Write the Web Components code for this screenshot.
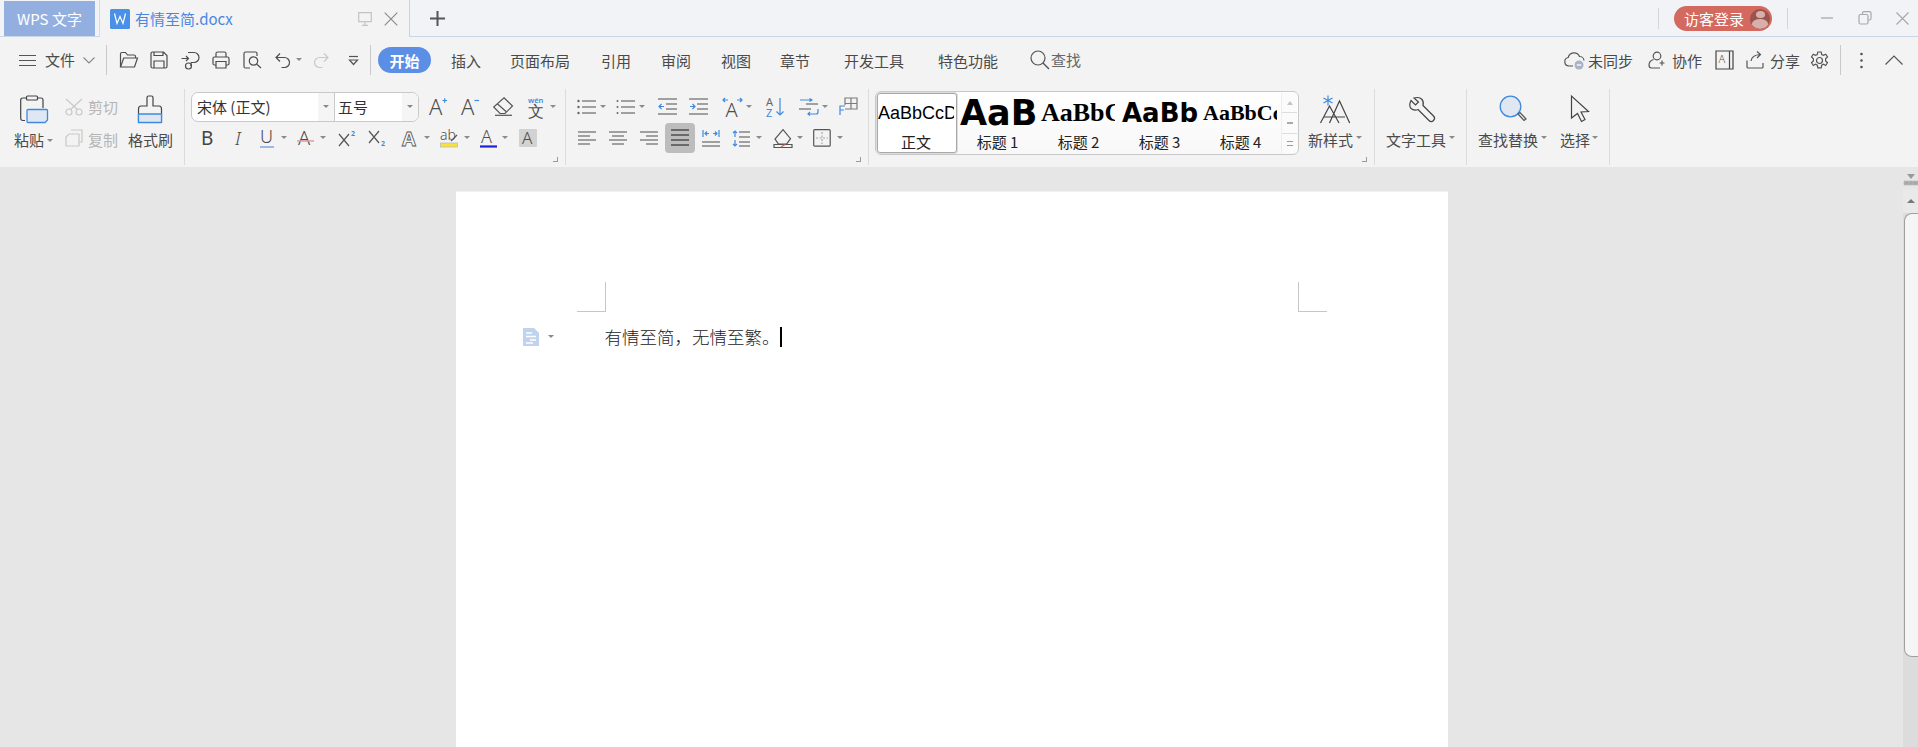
<!DOCTYPE html>
<html lang="zh"><head><meta charset="utf-8"><title>WPS 文字</title>
<style>
html,body{margin:0;height:747px;overflow:hidden;background:#e6e6e6;font-family:"Noto Sans CJK SC","Noto Sans",sans-serif;color:#444}
</style></head><body>
<wps-titlebar></wps-titlebar>
<wps-menubar></wps-menubar>
<wps-ribbon></wps-ribbon>
<wps-workspace></wps-workspace>
<script>
const B='#3f8ae0',L='#dfe7f3',G='#7b7b7b',D='#c9c9c9';
const F="font-family='Noto Sans' font-weight='300' stroke='none' fill='#4d4d4d'";
const lines=(arr,c=G,w=1.4)=>arr.map(a=>`<path d="M${a[0]} ${a[2]}H${a[1]}" stroke="${c}" stroke-width="${w}"/>`).join('');
const ICONS={
 menu:[17,13,`<path d="M0 1.5h17M0 6.5h17M0 11.5h17" stroke="#555"/>`],
 chev:[12,7,`<path d="M.5 .5l5.5 5.5 5.5-5.5" stroke="#8a8a8a"/>`],
 chevup:[18,10,`<path d="M.5 9.5l8.5-8.5 8.5 8.5" stroke="#555"/>`],
 open:[19,18,`<path d="M1.5 16V3Q1.5 1.5 3 1.5h3.5l2 2.5H15q1.5 0 1.5 1.5V7"/><path d="M1.5 16l3.2-9h13.8l-3 9z"/>`],
 save:[18,18,`<path d="M2.5 1h11L17 4.5v11q0 1.5-1.5 1.5h-13Q1 17 1 15.5v-13Q1 1 2.5 1zM4 17v-7h10v7M4 1v3.5h9V1"/>`],
 pdf:[19,19,`<path d="M.5 7.5H7M5 5l2.5 2.5L5 10M7 1.5h6a5 5 0 0 1 0 10H10"/><circle cx="7.5" cy="15" r="3"/><path d="M10 11.5v3.5"/>`],
 print:[18,18,`<path d="M4 6V2.5Q4 1 5.5 1h7Q14 1 14 2.5V6M4 14H2.5Q1 14 1 12.5v-5Q1 6 2.5 6h13Q17 6 17 7.5v5q0 1.5-1.5 1.5H14M4 10.5h10V17H4z"/>`],
 preview:[19,18,`<path d="M7 17H2.5Q1 17 1 15.5v-13Q1 1 2.5 1h10Q14 1 14 2.5V5"/><circle cx="10.5" cy="10" r="4.2"/><path d="M13.5 13l4.5 4"/>`],
 undo:[15,17,`<path d="M5 1.500L1 5.500l4 4M1 5.500h8.500a4.800 4.800 0 0 1 0 10H6.500" stroke="#4d4d4d"/>`],
 redo:[15,17,`<path d="M10 1.500l4 4-4 4M14 5.500H5.500a4.800 4.800 0 0 0 0 10H8.500" stroke="${D}"/>`],
 more:[11,11,`<path d="M1 1.500h9" stroke="#555"/><path d="M1.500 5h8L5.500 9.500z" stroke="#555"/>`],
 find:[20,20,`<circle cx="8" cy="8" r="7" stroke="#555"/><path d="M13 13l6 6" stroke="#555" stroke-width="1.4"/>`],
 cloud:[21,19,`<path d="M9 15H5a4.300 4.300 0 0 1-.8-8.500A6 6 0 0 1 15.500 5.500 4.300 4.300 0 0 1 20 9.500" stroke="#555"/><circle cx="15" cy="14" r="4.500" fill="#a9b4c6" stroke="none"/><path d="M12.800 14h4.400" stroke="#fff" stroke-width="1.300"/>`],
 collab:[19,18,`<circle cx="9" cy="5" r="3.800" stroke="#555"/><path d="M5.500 8.500Q1 10 1 14q0 3 2.500 3H12M14 9.500v5M11.500 12h5" stroke="#555"/>`],
 book:[19,20,`<path d="M1 1h17v18H1zM14.500 1v18" stroke="#444"/><text x="3.500" y="13" font-size="11" ${F}>A</text>`],
 share:[18,18,`<path d="M1 9.500V16q0 1 1 1h14q1 0 1-1v-4M5 10q1-6 9-6.500M11 .5l3.500 3L11 7" stroke="#555"/>`],
 gear:[19,19,`<path d="M7.800 1h3.400l.5 2.500 1.800.9 2.200-1.200 1.800 2.800-1.900 1.700v2.300l1.900 1.700-1.800 2.800-2.200-1.200-1.800.9-.5 2.600H7.800l-.5-2.600-1.800-.9-2.200 1.200-1.800-2.800 1.900-1.700V7.700L1.500 6l1.800-2.800 2.200 1.200 1.800-.9z" stroke="#555"/><circle cx="9.500" cy="9.500" r="3" stroke="#555"/>`],
 dots:[3,17,`<circle cx="1.500" cy="2" r="1.300" fill="#555" stroke="none"/><circle cx="1.500" cy="8.500" r="1.300" fill="#555" stroke="none"/><circle cx="1.500" cy="15" r="1.300" fill="#555" stroke="none"/>`],
 doc:[20,20,`<rect width="20" height="20" rx="1.500" fill="#4a90e8" stroke="none"/><path d="M4.500 4.500l2.500 10 3-7 3 7 2.500-10" stroke="#fff" stroke-width="1.200"/>`],
 monitor:[14,14,`<path d="M.7 .7h12.600v9H.7zM7 9.700v3.300M4 13.300h6" stroke="#c4c4c4" stroke-width="1.200"/>`],
 x:[14,14,`<path d="M.7 .7l12.600 12.600M13.300 .7L.7 13.300" stroke="#8b8b8b" stroke-width="1.200"/>`],
 plus:[15,15,`<path d="M7.500 0v15M0 7.500h15" stroke="#555" stroke-width="2"/>`],
 min:[12,2,`<path d="M0 1h12" stroke="#a8a8a8" stroke-width="1.300"/>`],
 rest:[14,14,`<path d="M4.500 3.500V2Q4.500 .7 6 .7h5.500Q13 .7 13 2v5.500Q13 9 11.500 9H10M2.500 3.500h6Q10 3.500 10 5v6.500Q10 13 8.500 13h-6Q1 13 1 11.500V5q0-1.500 1.500-1.500z" stroke="#a8a8a8"/>`],
 winx:[13,13,`<path d="M.5 .5l12 12M12.500 .5l-12 12" stroke="#a8a8a8" stroke-width="1.200"/>`],
 paste:[28,32,`<path d="M5 29.500H3Q.7 29.500 .7 27V9Q.7 7 3 7h18q2 0 2 2v8" stroke="#444"/><rect x="6.500" y="5" width="11" height="4" rx="1" fill="#f3f3f3" stroke="#444"/><path d="M8 18.500h18.500a1 1 0 0 1 1 1V29l-2.500 2.500H8a1 1 0 0 1-1-1v-11a1 1 0 0 1 1-1z" fill="${L}" stroke="${B}" stroke-width="1.300"/>`],
 cut:[18,18,`<path d="M17 1L5 12M1 1l12 11" stroke="${D}"/><circle cx="4" cy="14" r="3" stroke="${D}"/><circle cx="14" cy="14" r="3" stroke="${D}"/>`],
 copy:[18,18,`<path d="M6 1h11v12h-3M4 5h10v12H1V8z" stroke="${D}"/>`],
 brush:[27,32,`<path d="M10 15V6.500Q10 5 11.500 5h3Q16 5 16 6.500V15h6q2.500 0 2.500 3v13H1.500V18q0-3 2.500-3z" stroke="#444"/><path d="M1.500 23h23v8.500h-23z" fill="${L}" stroke="${B}" stroke-width="1.300"/>`],
 aplus:[18,20,`<text x="0" y="18" font-size="22" ${F}>A</text><path d="M13.500 3.500h4.500M15.700 1.300v4.400" stroke="${B}"/>`],
 aminus:[18,20,`<text x="0" y="18" font-size="22" ${F}>A</text><path d="M13.500 3.500h4.500" stroke="${B}"/>`],
 eraser:[20,19,`<path d="M11 .7L19.500 9l-7.500 7.500H7L.7 10zM4 6.500l9 8" stroke="#555"/><path d="M2 18.300h17" stroke="#555"/>`],
 wen:[16,20,`<text x="0" y="6" font-size="7.500" font-weight="600" fill="${B}" stroke="none" font-family="Noto Sans">wén</text><text x="0" y="20" font-size="16" ${F}>文</text>`],
 b:[12,16,`<text x="0" y="15" font-size="19" font-family="Noto Sans" fill="#444" stroke="none">B</text>`],
 i:[8,16,`<text x="0" y="15" font-size="19" font-style="italic" ${F}>I</text>`],
 u:[14,19,`<text x="0" y="13.500" font-size="18" ${F}>U</text><path d="M0 18h14" stroke="#7ea6de" stroke-width="1.500"/>`],
 astrike:[17,19,`<text x="1" y="16" font-size="20" ${F}>A</text><path d="M0 12h17" stroke="#e79a9a" stroke-width="1.500"/>`],
 sup:[18,17,`<path d="M1 4l10 12M11 4L1 16" stroke="#555"/><text x="13" y="6" font-size="7" fill="${B}" stroke="none" font-family="Noto Sans" font-weight="700">2</text>`],
 sub:[18,17,`<path d="M1 1l10 12M11 1L1 13" stroke="#555"/><text x="13" y="16" font-size="7" fill="${B}" stroke="none" font-family="Noto Sans" font-weight="700">2</text>`],
 aout:[19,17,`<text x="1" y="16" font-size="20" font-family="Noto Sans" font-weight="700" fill="#f3f3f3" stroke="#555" stroke-width=".8">A</text>`],
 ab:[18,19,`<text x="0" y="11" font-size="14" ${F}>ab</text><path d="M11 12l6-6" stroke="#555"/><rect x=".5" y="14" width="17" height="4" fill="#f6e534" stroke="#bbb" stroke-width=".8"/>`],
 ablue:[17,19,`<text x="1" y="14" font-size="18" ${F}>A</text><path d="M0 17.500h17" stroke="#2020d8" stroke-width="2.200"/>`],
 agray:[18,18,`<rect width="18" height="18" rx="1" fill="#d2d2d2" stroke="none"/><text x="3" y="15" font-size="17" ${F}>A</text>`],
 bul:[19,16,`${[2,8,14].map(y=>`<circle cx="1.500" cy="${y}" r="1.200" fill="#666" stroke="none"/>`).join('')}${lines([[5,19,2],[5,19,8],[5,19,14]])}`],
 num:[19,16,`${[2,8,14].map(y=>`<circle cx="1.500" cy="${y}" r="1" fill="#666" stroke="none"/>`).join('')}${lines([[5,19,2],[5,19,8],[5,19,14]])}`],
 outd:[19,17,`${lines([[0,19,1],[8,19,6],[8,19,11],[0,19,16]])}<path d="M6 8.500H1M3.500 6L1 8.500 3.500 11" stroke="${B}"/>`],
 ind:[19,17,`${lines([[0,19,1],[8,19,6],[8,19,11],[0,19,16]])}<path d="M1 8.500h5M3.500 6L6 8.500 3.500 11" stroke="${B}"/>`],
 aarr:[21,20,`<text x="3.500" y="19.500" font-size="20" ${F}>A</text><path d="M6 3H1M3 1L1 3l2 2M15 3h5M18 1l2 2-2 2" stroke="${B}"/>`],
 az:[19,20,`<text x="0" y="9" font-size="11" fill="#666" stroke="none" font-family="Noto Sans">A</text><text x="0" y="20" font-size="11" fill="${B}" stroke="none" font-family="Noto Sans">Z</text><path d="M14 1v17M10.500 14.500L14 18l3.500-3.500" stroke="${B}"/>`],
 dir:[19,17,`${lines([[7,19,6],[0,12,11]])}<path d="M1 2h12M10.500 .5L13 2l-2.500 1.500" stroke="${B}"/><path d="M19 11v3q0 2-2 2H9M11 14l-2 2 2 1.500" stroke="${B}"/>`],
 tbl:[19,19,`<path d="M6 8V1h12v11H6M12 1v11M6 6.500h12" stroke="#7b7b7b"/><path d="M1 18V9h5M1 13h4" stroke="${B}"/>`],
 al:[18,14,lines([[0,18,1],[0,12,5],[0,18,9],[0,12,13]])],
 ac:[18,14,lines([[0,18,1],[3,15,5],[0,18,9],[3,15,13]])],
 ar:[18,14,lines([[0,18,1],[6,18,5],[0,18,9],[6,18,13]])],
 aj:[30,30,`<rect width="30" height="30" rx="4" fill="#bdbdbd" stroke="none"/>${lines([[6,24,7],[6,24,12],[6,24,17],[6,24,22]],'#555',1.600)}`],
 dist:[18,18,`${lines([[0,18,13],[0,18,17]])}<path d="M1 1v7M17 1v7M3 4.500h4M5 2.500L3 4.500l2 2M11 4.500h4M13 2.500l2 2-2 2" stroke="${B}"/>`],
 ls:[18,17,`${lines([[7,18,2],[7,18,7],[7,18,12],[7,18,16]])}<path d="M3 1v6M1 3l2-2 2 2M3 10v6M1 14l2 2 2-2" stroke="${B}"/>`],
 shade:[20,19,`<path d="M10 .7l7.500 9-4 5.500H5.500L2 10z" stroke="#555"/><path d="M1 15.500h18v3H1z" stroke="#555"/><path d="M8 18l4-2.500" stroke="#e06060" stroke-width="1.300"/>`],
 border:[18,18,`<rect x=".7" y=".7" width="16.500" height="16.500" rx="1" stroke="#555"/><path d="M9 3v12M3 9h12" stroke="#aaa" stroke-dasharray="2 1.500"/>`],
 newst:[30,32,`<path d="M.5 32L9.500 15 19 32M9.500 32L19.500 10 29.700 32M4 26h11M14 26h11" stroke="#444"/><path d="M8 4.500v10M3.500 7l9 5M12.500 7l-9 5" stroke="${B}" stroke-width="1.200"/>`],
 wrench:[28,32,`<path d="M4 5.500l4.500 4.500 3-3L7 3q5.500-1.500 8 1.500 2 2.500 1 6l10.500 10.500a3 3 0 0 1-4.500 4.500L11 14.500Q7 16 4 13.500 1.500 10.500 4 5.500z" stroke="#444" transform="translate(0,4)"/>`],
 mag:[28,32,`<circle cx="11.500" cy="15.500" r="10.300" fill="${L}" stroke="${B}" stroke-width="1.300"/><path d="M19 23l6 6.500 2-1.500-6-6.500z" fill="#f3f3f3" stroke="#555"/>`],
 arrow:[20,32,`<path d="M1.500 5v22l6-4.500 4 8 3.500-2-4-7.500 7.500-.5z" stroke="#444" stroke-width="1.200"/>`],
 pagedoc:[16,18,`<path d="M0 0h11l5 5v13H0z" fill="#bfd3ee" stroke="none"/><path d="M3 5h6M3 8.500h10M7 12h6M3 15h7" stroke="#fff" stroke-width="1.300"/>`],
 sbtop:[14,11,`<path d="M3 0h8l-4 5z" fill="#999" stroke="none"/><path d="M0 7h14v4H0zM5 7v4M9 7v4" fill="#a8a8a8" stroke="#bbb" stroke-width=".7"/>`]
};
function def(name,css,html){
 customElements.define(name,class extends HTMLElement{
  connectedCallback(){
   if(this.shadowRoot)return;
   const r=this.attachShadow({mode:'open'});
   r.innerHTML=`<style>:host{box-sizing:border-box}*{box-sizing:border-box}${css}</style>`+(typeof html==='function'?html(this):html);
  }
 });
}
def('wps-icon',':host{display:inline-flex;flex:none}svg{display:block;overflow:visible}',el=>{
 const [w,h,s]=ICONS[el.getAttribute('name')];
 return `<svg width="${w}" height="${h}" viewBox="0 0 ${w} ${h}" fill="none" stroke="#4d4d4d" stroke-width="1.200">${s}</svg>`;
});
def('wps-caret',':host{display:block;flex:none;width:6px;height:3.500px;border:3px solid transparent;border-top:3.500px solid #8a8a8a;border-bottom:0}','');
function seq(x0,items){
 let cur=x0,out='';
 for(const it of items){
  const [k,x]=it;const m=x-cur;
  if(k==='i'){out+=`<wps-icon name="${it[2]}" style="margin-left:${m}px"></wps-icon>`;cur=x+ICONS[it[2]][0];}
  else if(k==='c'){out+=`<wps-caret style="margin-left:${m}px${it[2]?';margin-top:'+it[2]+'px':''}"></wps-caret>`;cur=x+6;}
  else if(k==='t'){out+=`<span class="t ${it[4]||''}" style="margin-left:${m}px;width:${it[2]}px">${it[3]}</span>`;cur=x+it[2];}
  else if(k==='s'){out+=`<span class="sep" style="margin-left:${m}px"></span>`;cur=x+1;}
 }
 return out;
}
const TXT='.t{flex:none;white-space:nowrap;font-size:15px;line-height:20px;color:#4a4a4a}';

def('wps-tab',`:host{display:flex;align-items:center;flex:none;width:311px;height:37px;background:#f3f3f4;border-left:1px solid #d3dbe6;border-right:1px solid #c5d2e3;padding-left:10px}
 .n{margin-left:5px;font-size:15px;color:#4a86e0;white-space:nowrap;flex:1}`,
 `<wps-icon name="doc"></wps-icon><span class="n"><slot></slot></span><wps-icon name="monitor"></wps-icon><wps-icon name="x" style="margin:0 11px 0 12px"></wps-icon>`);
def('wps-pill',`:host{display:flex;align-items:center;flex:none;width:98px;height:25px;border-radius:13px;background:#d4695f;color:#fff;font-size:15px;padding-left:10px;margin-top:1px}
 .a{margin-left:6px;width:20px;height:20px;border-radius:50%;background:#99544f;overflow:hidden;display:flex;flex-direction:column;align-items:center}
 .h{width:9px;height:9px;border-radius:50%;background:#d8b0ab;margin-top:2px}.b{width:16px;height:12px;border-radius:50%;background:#d8b0ab;margin-top:1px}`,
 `<span><slot></slot></span><span class="a"><span class="h"></span><span class="b"></span></span>`);
def('wps-titlebar',`:host{display:flex;height:37px;background:#f2f3f7;border-bottom:1px solid #c9d6e6}
 .wps{flex:none;width:91px;height:35px;margin:1px 4px 0;background:#93afdf;color:#fff;font-size:15px;display:flex;align-items:center;justify-content:center}
 .sep{flex:none;width:1px;height:21px;background:#d5d5d8;}
 .r{display:flex;align-items:center;flex:1;height:36px}`,
 `<div class="wps">WPS 文字</div><wps-tab>有情至简.docx</wps-tab>
 <div class="r">${seq(410,[['i',430,'plus'],['s',1658]])}<wps-pill style="margin-left:15px">访客登录</wps-pill>${seq(1772,[['s',1787],['i',1821,'min'],['i',1858,'rest'],['i',1896,'winx']])}</div>`);
def('wps-menubar',`:host{display:flex;align-items:center;height:46px;background:#f3f3f3}
 ${TXT}.sep{flex:none;width:1px;height:30px;background:#c9c9c9}
 .pill{flex:none;width:53px;height:26px;margin-left:7px;border-radius:13px;background:#5b8fe6;color:#fff;font-size:15px;font-weight:700;display:flex;align-items:center;justify-content:center}
 .m{margin-top:2px}.f{color:#666}`,
 seq(0,[['i',19,'menu'],['t',45,30,'文件'],['i',83,'chev'],['s',106],['i',119,'open'],['i',150,'save'],['i',181,'pdf'],['i',212,'print'],['i',243,'preview'],['i',275,'undo'],['c',296],['i',314,'redo'],['i',348,'more'],['s',370]])
 +`<div class="pill">开始</div>`
 +seq(431,[['t',451,30,'插入','m'],['t',510,60,'页面布局','m'],['t',601,30,'引用','m'],['t',661,30,'审阅','m'],['t',721,30,'视图','m'],['t',780,30,'章节','m'],['t',844,60,'开发工具','m'],['t',938,60,'特色功能','m'],['i',1030,'find'],['t',1051,30,'查找','f'],['i',1564,'cloud'],['t',1588,45,'未同步','m'],['i',1648,'collab'],['t',1672,30,'协作','m'],['i',1715,'book'],['i',1746,'share'],['t',1770,30,'分享','m'],['i',1810,'gear'],['s',1840],['i',1860,'dots'],['i',1885,'chevup']]));
def('wps-group',`:host{display:block;flex:none;height:76px;border-right:1px solid #dcdcdc;position:relative}
 .launch{position:absolute;right:var(--lr,7px);bottom:3px;width:5px;height:5px;border-right:1px solid #999;border-bottom:1px solid #999}`,
 el=>`<slot></slot>${el.hasAttribute('launch')?'<span class="launch"></span>':''}`);
def('wps-combo',`:host{display:flex;flex:none;align-items:center;width:228px;height:30px;margin-left:6px;border:1px solid #c9c9c9;border-radius:7px;background:#fff;font-size:15px;color:#333;overflow:hidden}
 .c{display:flex;align-items:center;height:100%;padding-left:5px}.d{height:100%;width:16px;background:#f5f5f5;display:flex;align-items:center;justify-content:center;margin-left:auto}
 .one{width:143px;border-right:1px solid #c9c9c9;flex:none}.two{flex:1;padding-left:3px}`,
 `<div class="c one">宋体 (正文)<span class="d"><wps-caret></wps-caret></span></div><div class="c two">五号<span class="d"><wps-caret></wps-caret></span></div>`);
def('wps-style',`:host{display:flex;flex-direction:column;align-items:center;flex:none;width:81px;height:60px;overflow:hidden;font-size:15px;color:#222}
 :host([selected]){width:80px;border:1px solid #a9a9a9;border-radius:3px;box-shadow:0 0 0 1px #dcdcdc;background:#fff;padding-right:2px}
 .s{height:39px;width:100%;overflow:hidden;white-space:nowrap;display:flex;align-items:center;justify-content:flex-start;padding-left:1px;line-height:39px;color:#000}
 .l{line-height:20px}`,
 el=>`<div class="s" style="${el.getAttribute('fs')}">${el.getAttribute('sample')}</div><div class="l"><slot></slot></div>`);
def('wps-gallery',`:host{display:flex;flex:none;width:424px;height:64px;margin:2px 0 0 6px;border:1px solid #c9c9c9;border-radius:6px;background:linear-gradient(#fff,#f8f8f8);overflow:hidden;padding:1px;align-items:flex-start}
 .sp{margin-left:auto;width:16px;height:60px;background:#fbfbfb;border-left:1px solid #eee;display:flex;flex-direction:column;flex:none}
 .sp span{flex:1;display:flex;align-items:center;justify-content:center;border-bottom:1px solid #dedede;color:#aaa}.sp span:last-child{border:0}
 .up{width:0;height:0;border:3.500px solid transparent;border-bottom:4px solid #c4c4c4;border-top:0}.dn{width:6px;height:2px;background:#aaa;display:block}.mo{width:6px;height:5px;border-top:1px solid #999;border-bottom:1px solid #999;display:block}`,
 `<slot></slot><div class="sp"><span><i class="up"></i></span><span><i class="dn"></i></span><span><i class="mo"></i></span></div>`);
const ribbonCSS=`:host{display:flex;height:84px;background:#f3f3f3;padding-top:6px;align-items:flex-start}
 ${TXT}.row{display:flex;align-items:center;height:35px}.row+.row{height:28px}
 .off{color:#b5b5b5}.l{padding-top:4px}.col{display:flex;flex-direction:column}`;
const clip=';clip-path:inset(0 4px 0 0)';
def('wps-ribbon',ribbonCSS,`
<wps-group style="width:185px"><div class="row">${seq(0,[['i',20,'paste'],['i',65,'cut'],['t',88,30,'剪切','off'],['i',137,'brush']])}</div>
<div class="row">${seq(0,[['t',14,30,'粘贴','l'],['c',47,5],['i',65,'copy'],['t',88,30,'复制','off l'],['t',128,45,'格式刷','l']])}</div></wps-group>
<wps-group style="width:381px" launch><div class="row"><wps-combo></wps-combo>${seq(419,[['i',429,'aplus'],['i',461,'aminus'],['i',493,'eraser'],['i',528,'wen'],['c',550]])}</div>
<div class="row">${seq(185,[['i',201,'b'],['i',235,'i'],['i',260,'u'],['c',281],['i',297,'astrike'],['c',320],['i',338,'sup'],['i',368,'sub'],['i',401,'aout'],['c',424],['i',440,'ab'],['c',464],['i',480,'ablue'],['c',502],['i',519,'agray']])}</div></wps-group>
<wps-group style="width:303px" launch><div class="row">${seq(566,[['i',577,'bul'],['c',600],['i',616,'num'],['c',639],['i',658,'outd'],['i',689,'ind'],['i',722,'aarr'],['c',746],['i',766,'az'],['i',799,'dir'],['c',822],['i',839,'tbl']])}</div>
<div class="row">${seq(566,[['i',578,'al'],['i',609,'ac'],['i',640,'ar'],['i',665,'aj'],['i',702,'dist'],['i',732,'ls'],['c',756],['i',773,'shade'],['c',797],['i',813,'border'],['c',837]])}</div></wps-group>
<wps-group style="width:506px;display:flex" launch>
 <wps-gallery>
  <wps-style selected sample="AaBbCcD" fs="font:18px 'Liberation Sans';padding-left:0">正文</wps-style>
  <wps-style sample="AaB" fs="font:700 35px 'DejaVu Sans';padding-left:3px">标题 1</wps-style>
  <wps-style sample="AaBbC" fs="font:700 26px 'Liberation Serif';padding-left:3px${clip}">标题 2</wps-style>
  <wps-style sample="AaBb" fs="font:700 26px 'DejaVu Sans';padding-left:3px">标题 3</wps-style>
  <wps-style sample="AaBbCc" fs="font:700 22px 'Liberation Serif';padding-left:3px${clip}">标题 4</wps-style>
 </wps-gallery>
 <div class="col"><div class="row">${seq(1299,[['i',1320,'newst']])}</div><div class="row">${seq(1299,[['t',1308,45,'新样式','l'],['c',1356,0]])}</div></div>
</wps-group>
<wps-group style="width:92px"><div class="row">${seq(1375,[['i',1407,'wrench']])}</div><div class="row">${seq(1375,[['t',1386,60,'文字工具','l'],['c',1449,0]])}</div></wps-group>
<wps-group style="width:143px"><div class="row">${seq(1467,[['i',1499,'mag'],['i',1570,'arrow']])}</div><div class="row">${seq(1467,[['t',1478,60,'查找替换','l'],['c',1541,0],['t',1560,30,'选择','l'],['c',1592,0]])}</div></wps-group>`);
def('wps-page',`:host{display:block;flex:none;width:992px;height:560px;background:#fff;border-top:1px solid #f1f1f1;padding-top:90px}
 .crops{display:flex;justify-content:space-between;margin:0 121px}
 .crop{width:29px;height:30px;border-bottom:1px solid #c6c6c6}.crop.a{border-right:1px solid #c6c6c6}.crop.b{border-left:1px solid #c6c6c6}
 .line{display:flex;align-items:center;margin-top:15px;padding-left:67px;height:20px}
 .txt{margin-left:51px;font-size:17.500px;line-height:20px;color:#222;font-weight:300;white-space:nowrap}
 .cur{width:2px;height:20px;background:#000;flex:none}`,
 `<div class="crops"><div class="crop a"></div><div class="crop b"></div></div>
 <div class="line"><wps-icon name="pagedoc"></wps-icon><wps-caret style="margin-left:9px"></wps-caret><span class="txt"><slot></slot></span><span class="cur"></span></div>`);
def('wps-scrollbar',`:host{display:flex;flex-direction:column;flex:none;width:15px;height:580px;background:#e6e6e6;align-items:stretch}
 .top{height:22px;padding-top:7px;display:flex;justify-content:center}
 .track{flex:1;background:#dcdcdc;display:flex;flex-direction:column}
 .ar{height:24px;background:#e9e9e9;display:flex;align-items:center;justify-content:center}
 .ar i{width:0;height:0;border:4px solid transparent;border-bottom:4px solid #777;border-top:0;display:block}
 .th{height:444px;width:14px;margin-left:1px;background:#f5f5f5;border:1px solid #a0a0a0;border-right:0;border-radius:8px 0 0 8px}`,
 `<div class="top"><wps-icon name="sbtop"></wps-icon></div><div class="track"><div class="ar"><i></i></div><div class="th"></div></div>`);
def('wps-workspace',`:host{display:flex;height:580px;background:#e6e6e6;overflow:hidden}
 .m{flex:1;display:flex;justify-content:center;padding-top:24px}`,
 `<div class="m"><wps-page>有情至简，无情至繁。</wps-page></div><wps-scrollbar></wps-scrollbar>`);
</script>
</body></html>
